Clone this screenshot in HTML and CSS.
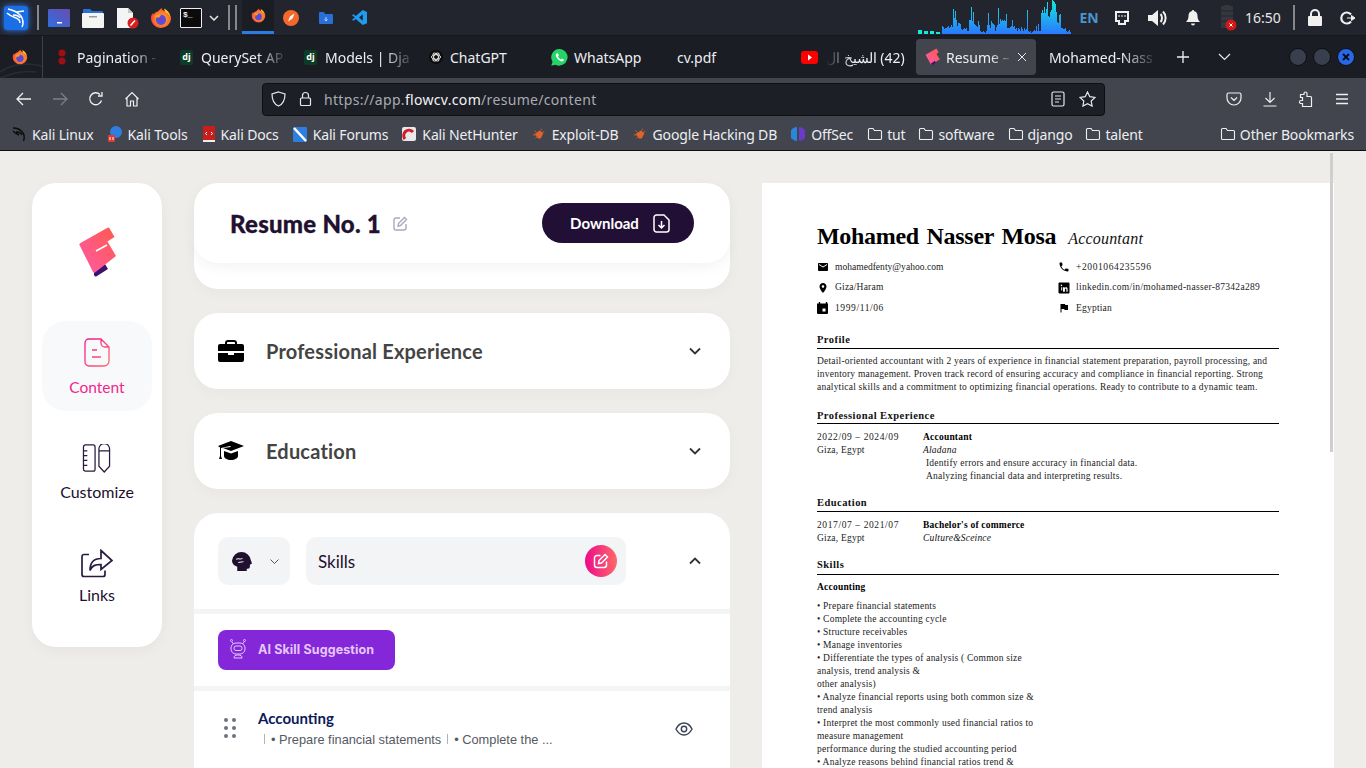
FILE: index.html
```html
<!DOCTYPE html>
<html lang="en">
<head>
    <meta charset="UTF-8">
    <meta name="viewport" content="width=device-width, initial-scale=1.0">
    <title>Resume - FlowCV</title>
    <link rel="stylesheet" href="styles.css">
</head>
<body>
    <!-- Shared gradients and symbols -->
    <svg class="svg-defs">
        <defs>
            <linearGradient id="grad-graph" gradientUnits="userSpaceOnUse" x1="0" y1="0" x2="0" y2="34">
                <stop offset="0" stop-color="#12e8dc"/>
                <stop offset="1" stop-color="#2a78ff"/>
            </linearGradient>
            <linearGradient id="grad-logo" x1="0" y1="1" x2="1" y2="0">
                <stop offset="0" stop-color="#ff5aa8"/>
                <stop offset="1" stop-color="#ff5a4c"/>
            </linearGradient>
            <linearGradient id="grad-content" x1="0" y1="0" x2="1" y2="1">
                <stop offset="0" stop-color="#f0168c"/>
                <stop offset="1" stop-color="#ff6a70"/>
            </linearGradient>
            <linearGradient id="grad-desktop" x1="0" y1="1" x2="1" y2="0">
                <stop offset="0" stop-color="#2f6fe0"/>
                <stop offset="1" stop-color="#6a4bb0"/>
            </linearGradient>
            <radialGradient id="grad-fox" cx="0.55" cy="0.55" r="0.6">
                <stop offset="0" stop-color="#ffb02e"/>
                <stop offset="0.7" stop-color="#ff6a2a"/>
                <stop offset="1" stop-color="#e8274e"/>
            </radialGradient>
            <symbol id="firefox" viewBox="0 0 24 24">
                <path d="M12 23A11 11 0 0 1 1.300 9.500C2 8 2.600 7 3.500 6.500L4 8.500C5 6.500 6.500 5.500 8.500 5 9.500 3.500 11 3 12.500 .8c.5 2.500 2 3.500 4.500 4.200 1.500.5 5 3.500 6 7.500A11 11 0 0 1 12 23z" fill="url(#grad-fox)"/>
                <path d="M15.500 1.500c4 2 7 6 7 10.500-1-3-3-5-5.500-6-1-1.500-1.500-3-1.500-4.500z" fill="#ffc22e"/>
                <circle cx="12" cy="14" r="5.500" fill="#4b55d8"/>
                <circle cx="12.500" cy="13.500" r="3" fill="#7a3bd0"/>
                <path d="M5 10c2-1.500 5-2 7-1l-2 2.500H7z" fill="#ff9a2e"/>
            </symbol>
            <symbol id="folder" viewBox="0 0 16 16">
                <path d="M1.500 3.500a1 1 0 0 1 1-1h3.500l1.500 2h6a1 1 0 0 1 1 1v7a1 1 0 0 1-1 1h-11a1 1 0 0 1-1-1z" fill="none" stroke="#eceef2" stroke-width="1.100"/>
            </symbol>
            <symbol id="fire-bug" viewBox="0 0 16 16">
                <path d="M3 8l6-4 4 3-3 6H7z" fill="#e2622a"/>
                <path d="M3 4l2 2M1 9h3M4 13l2-2M11 2l-1 2M14 5l-2 1" stroke="#e2622a" fill="none"/>
            </symbol>
        </defs>
    </svg>

    <!-- Desktop panel -->
    <header class="panel">
        <div class="launcher w34">
            <svg class="kali-logo" width="24" height="24" viewBox="0 0 24 24">
                <rect width="24" height="24" rx="3" fill="#1a6fe6"/>
                <path d="M4 3c5 1 9 3 12 6 2 2 3 5 3 8 0 1-.5 3-1 4M9 9c3 0 6 1 7 3M3 7c3 3 6 4 9 5 3 1 4 3 4 5M12 6l8-1" fill="none" stroke="#fff" stroke-width="1.500"/>
            </svg>
        </div>
        <span class="panel-sep"></span>
        <div class="launcher w34">
            <svg width="22" height="18" viewBox="0 0 22 18">
                <rect width="22" height="18" rx="1" fill="url(#grad-desktop)"/>
                <rect x="9" y="13" width="5" height="1.500" fill="#fff"/>
            </svg>
        </div>
        <div class="launcher w34">
            <svg width="22" height="20" viewBox="0 0 22 20">
                <path d="M1 2a1 1 0 0 1 1-1h6l2 2h10a1 1 0 0 1 1 1v2H1z" fill="#2a6fd8"/>
                <rect y="5" width="22" height="15" rx="1" fill="#f4f4f2"/>
                <rect x="7" y="8" width="8" height="1.500" fill="#9a9a9a"/>
            </svg>
        </div>
        <div class="launcher w36">
            <svg width="24" height="22" viewBox="0 0 24 22">
                <path d="M1 1h11l5 5v15H1z" fill="#f4f4f4"/>
                <path d="M12 1l5 5h-5z" fill="#c8c8c8"/>
                <circle cx="17" cy="16" r="5.500" fill="#d81e1e"/>
                <path d="M14.500 18.500l4.500-5" stroke="#fff" stroke-width="1.500"/>
            </svg>
        </div>
        <div class="launcher w30">
            <svg width="22" height="22"><use href="#firefox"/></svg>
        </div>
        <div class="launcher w30">
            <div class="term-icon">$_</div>
        </div>
        <div class="launcher w16">
            <svg width="10" height="6" viewBox="0 0 10 6"><path d="M1 1l4 4 4-4" fill="none" stroke="#e8e8e8" stroke-width="1.500"/></svg>
        </div>
        <span class="panel-sep sep-a"></span>
        <span class="panel-sep sep-b"></span>
        <div class="launcher w32 launcher-active">
            <svg width="15" height="15"><use href="#firefox"/></svg>
        </div>
        <div class="launcher w34">
            <svg width="16" height="16" viewBox="0 0 16 16">
                <circle cx="8" cy="8" r="8" fill="#f4682c"/>
                <path d="M5 11.500l2-5 4.500-3-2 5z" fill="#fff"/>
            </svg>
        </div>
        <div class="launcher w36">
            <svg width="14" height="12" viewBox="0 0 14 12">
                <path d="M0 1a1 1 0 0 1 1-1h4l1 2h7a1 1 0 0 1 1 1v8a1 1 0 0 1-1 1H1a1 1 0 0 1-1-1z" fill="#2a6fd8"/>
                <path d="M7 5v4M5.500 7.500L7 9l1.500-1.500" fill="none" stroke="#bcd6ff"/>
            </svg>
        </div>
        <div class="launcher w30">
            <svg width="15" height="15" viewBox="0 0 16 16">
                <path d="M11.500 0L16 2v12l-4.500 2L4 9.500 1.500 11.500 0 10.500 3 8 0 5.500 1.500 4.500 4 6.500zM11.500 4.500L7.500 8l4 3.500z" fill="#1f9cf0"/>
            </svg>
        </div>

        <div class="panel-spacer"></div>

        <div class="net-graph">
            <span class="net-block h4"></span>
            <span class="net-block h3"></span>
            <span class="net-block h3"></span>
            <span class="net-block h2"></span>
            <svg class="net-bars" width="129" height="34" viewBox="0 0 129 34">
                <path fill="url(#grad-graph)" d="M0 34V26h1V27h1V29h1V28h1V28h1V27h1V26h1V28h1V27h1V25h1V27h1V9h1V18h1V11h1V20h1V26h1V23h1V23h1V24h1V29h1V30h1V29h1V28h1V29h1V28h1V31h1V31h1V20h1V20h1V7h1V21h1V12h1V24h1V25h1V26h1V27h1V21h1V25h1V31h1V32h1V32h1V31h1V32h1V33h1V31h1V25h1V13h1V25h1V28h1V21h1V23h1V24h1V25h1V31h1V27h1V25h1V8h1V24h1V19h1V21h1V20h1V21h1V20h1V21h1V14h1V28h1V28h1V28h1V27h1V26h1V20h1V27h1V26h1V29h1V28h1V31h1V28h1V29h1V31h1V27h1V29h1V31h1V28h1V30h1V29h1V10h1V31h1V32h1V31h1V33h1V32h1V31h1V30h1V31h1V26h1V31h1V24h1V31h1V31h1V13h1V10h1V13h1V7h1V13h1V9h1V2h1V16h1V17h1V12h1V10h1V0h1V1h1V2h1V4h1V12h1V22h1V23h1V15h1V14h1V28h1V28h1V29h1V29h1V28h1V31h1V32h1V31h1V30h1V32h1V34z"/>
            </svg>
        </div>
        <div class="tray w34 tray-lang">EN</div>
        <div class="tray w32">
            <svg width="16" height="16" viewBox="0 0 16 16">
                <path d="M2 2h12v9h-3v3H5v-3H2z" fill="none" stroke="#f0f0f0" stroke-width="2"/>
                <path d="M5 5v2M8 5v2M11 5v2" stroke="#f0f0f0"/>
            </svg>
        </div>
        <div class="tray w40">
            <svg width="20" height="18" viewBox="0 0 20 18">
                <path d="M0 6h4l6-5v16l-6-5H0z" fill="#f0f0f0"/>
                <path d="M12.500 5c2 2 2 6 0 8M15 2.500c3.500 3.500 3.500 9.500 0 13" fill="none" stroke="#f0f0f0" stroke-width="2"/>
            </svg>
        </div>
        <div class="tray w30">
            <svg width="14" height="16" viewBox="0 0 14 16">
                <path d="M7 0c.7 0 1 .5 1 1 2.500.5 3.500 2.500 3.500 5 0 3 1 4.500 2.500 6H0c1.500-1.500 2.500-3 2.500-6 0-2.500 1-4.500 3.500-5 0-.5.3-1 1-1zM5 13.500h4a2 2 0 0 1-4 0z" fill="#f0f0f0"/>
            </svg>
        </div>
        <div class="tray w34 tray-battery">
            <svg width="18" height="26" viewBox="0 0 18 26">
                <rect x="2" y="1" width="12" height="22" rx="1" fill="#34373e"/>
                <rect x="5" y="0" width="6" height="2" fill="#34373e"/>
                <path d="M2 6h12M2 11h12M2 16h12" stroke="#23262e"/>
                <circle cx="12" cy="20" r="5.500" fill="#d01818"/>
                <path d="M10.500 18.500l3 3M13.500 18.500l-3 3" stroke="#fff"/>
            </svg>
        </div>
        <div class="clock">16:50</div>
        <span class="panel-sep sep-clock"></span>
        <div class="tray w30 tray-lock">
            <svg width="14" height="17" viewBox="0 0 14 17">
                <path d="M3 7V5a4 4 0 0 1 8 0v2" fill="none" stroke="#f0f0f0" stroke-width="2"/>
                <rect y="7" width="14" height="10" rx="1" fill="#f0f0f0"/>
            </svg>
        </div>
        <div class="tray w36">
            <svg width="16" height="14" viewBox="0 0 16 14">
                <path d="M11 3.500a5.500 5.500 0 1 0 0 7" fill="none" stroke="#f0f0f0" stroke-width="2.200"/>
                <path d="M7 7h6M11.500 4.500L15 7l-3.500 2.500z" fill="#f0f0f0" stroke="#f0f0f0"/>
            </svg>
        </div>
    </header>

    <!-- Firefox tab strip -->
    <div class="tabbar">
        <div class="fx-btn">
            <svg class="fx-curves" width="42" height="42" viewBox="0 0 42 42">
                <path d="M0 36c12-8 26-10 42-6M0 42c10-4 22-8 36-6" fill="none" stroke="#2a2c33" stroke-width="1.500"/>
            </svg>
            <svg class="fx-logo" width="16" height="16"><use href="#firefox"/></svg>
        </div>
        <div class="tabs">
            <div class="tab tab-pagination">
                <svg class="tab-icon" width="8" height="16" viewBox="0 0 8 16"><circle cx="4" cy="4" r="3.500" fill="#9c0f14"/><circle cx="4" cy="12" r="3.500" fill="#9c0f14"/></svg>
                <span class="tab-title tab-fade">Pagination -</span>
            </div>
            <div class="tab">
                <span class="dj-icon">dj</span>
                <span class="tab-title tab-fade">QuerySet AP</span>
            </div>
            <div class="tab">
                <span class="dj-icon">dj</span>
                <span class="tab-title tab-fade">Models | Dja</span>
            </div>
            <div class="tab tab-gpt">
                <svg class="tab-icon" width="14" height="14" viewBox="0 0 14 14">
                    <circle cx="7" cy="7" r="7" fill="#0d0d0d"/>
                    <g fill="none" stroke="#f0f0f0" stroke-width=".9">
                        <ellipse cx="7" cy="7" rx="4.500" ry="2.300"/>
                        <ellipse cx="7" cy="7" rx="4.500" ry="2.300" transform="rotate(60 7 7)"/>
                        <ellipse cx="7" cy="7" rx="4.500" ry="2.300" transform="rotate(120 7 7)"/>
                    </g>
                </svg>
                <span class="tab-title">ChatGPT</span>
            </div>
            <div class="tab tab-wa">
                <svg class="tab-icon" width="17" height="17" viewBox="0 0 17 17">
                    <path d="M8.500 0a8.300 8.300 0 0 0-7 12.700L.3 16.800l4.200-1.100A8.300 8.300 0 1 0 8.500 0z" fill="#25d366"/>
                    <path d="M5.500 4.500c-1 1-1 2.500.5 4.500s3.500 3.500 5 3.500c1 0 2-1 2-1.700l-2-1.300-1 1c-1.500-.5-2.500-1.700-3-3l.8-1-1-2.300z" fill="#fff"/>
                </svg>
                <span class="tab-title">WhatsApp</span>
            </div>
            <div class="tab">
                <span class="tab-title">cv.pdf</span>
            </div>
            <div class="tab">
                <svg class="tab-icon" width="17" height="13" viewBox="0 0 17 13">
                    <rect width="17" height="13" rx="3" fill="#f00"/>
                    <path d="M7 3.500l4 3-4 3z" fill="#fff"/>
                </svg>
                <span class="tab-title tab-rtl" dir="rtl">(42) الشيخ ال</span>
            </div>
            <div class="tab tab-active">
                <svg class="tab-icon" width="15" height="18" viewBox="0 0 39 48">
                    <path d="M1 18L30 1l6 10-6 5 9 14-23 15z" fill="url(#grad-logo)"/>
                    <path d="M15 42l11-8 2 5-10 7z" fill="#3c1170"/>
                </svg>
                <span class="tab-title tab-fade">Resume –</span>
                <svg class="tab-close" width="10" height="10" viewBox="0 0 10 10"><path d="M1 1l8 8M9 1l-8 8" stroke="#e8e8ea" stroke-width="1"/></svg>
            </div>
            <div class="tab">
                <span class="tab-title tab-fade">Mohamed-Nass</span>
            </div>
        </div>
        <div class="tabbar-btn first">
            <svg width="14" height="14" viewBox="0 0 14 14"><path d="M7 1v12M1 7h12" stroke="#f0f0f0" stroke-width="1.300"/></svg>
        </div>
        <div class="tabbar-btn">
            <svg width="13" height="8" viewBox="0 0 13 8"><path d="M1 1l5.500 5.500L12 1" fill="none" stroke="#e8e8ea" stroke-width="1.200"/></svg>
        </div>
        <div class="win-btns">
            <span class="win-btn"></span>
            <span class="win-btn"></span>
            <span class="win-btn win-close">
                <svg width="8" height="8" viewBox="0 0 8 8"><path d="M1 1l6 6M7 1L1 7" stroke="#0a0a14" stroke-width="1.800"/></svg>
            </span>
        </div>
    </div>

    <!-- Firefox toolbar -->
    <div class="toolbar">
        <div class="tool-btn">
            <svg width="16" height="14" viewBox="0 0 16 14"><path d="M15 7H1.500M7 1L1 7l6 6" fill="none" stroke="#f0f0f2" stroke-width="1.300"/></svg>
        </div>
        <div class="tool-btn">
            <svg width="16" height="14" viewBox="0 0 16 14"><path d="M1 7h13.500M9 1l6 6-6 6" fill="none" stroke="#7d7f86" stroke-width="1.300"/></svg>
        </div>
        <div class="tool-btn">
            <svg width="16" height="16" viewBox="0 0 16 16"><path d="M13.500 9.500A6 6 0 1 1 12 3.500M14 1v4h-4" fill="none" stroke="#f0f0f2" stroke-width="1.300"/></svg>
        </div>
        <div class="tool-btn">
            <svg width="16" height="16" viewBox="0 0 16 16"><path d="M1.500 8L8 1.500 14.500 8M3 7v8h3.500v-5h3v5H13V7" fill="none" stroke="#f0f0f2" stroke-width="1.200"/></svg>
        </div>
        <div class="urlbar">
            <svg class="url-shield" width="15" height="16" viewBox="0 0 15 16"><path d="M7.500 1L14 3c0 6-1.500 10-6.500 12C2.500 13 1 9 1 3z" fill="none" stroke="#e8e8ea" stroke-width="1.200"/></svg>
            <svg class="url-lock" width="13" height="16" viewBox="0 0 13 16"><path d="M3.500 7V4.500a3 3 0 0 1 6 0V7" fill="none" stroke="#e8e8ea" stroke-width="1.200"/><rect x="1.500" y="7" width="10" height="7.500" rx="1" fill="none" stroke="#e8e8ea" stroke-width="1.200"/></svg>
            <span class="url-text">https://app.<b>flowcv.com</b>/resume/content</span>
            <svg class="url-reader" width="14" height="16" viewBox="0 0 14 16"><rect x="1" y="1" width="12" height="14" rx="1.500" fill="none" stroke="#e8e8ea" stroke-width="1.200"/><path d="M4 5h6M4 8h6M4 11h4" stroke="#e8e8ea"/></svg>
            <svg class="url-star" width="17" height="16" viewBox="0 0 17 16"><path d="M8.500 1l2.300 4.700 5.200.7-3.800 3.600.9 5.100-4.600-2.400-4.600 2.400.9-5.100L1 6.400l5.200-.7z" fill="none" stroke="#e8e8ea" stroke-width="1.200"/></svg>
        </div>
        <div class="tool-btn">
            <svg width="16" height="16" viewBox="0 0 16 16"><path d="M2.500 2h11A1.500 1.500 0 0 1 15 3.500V7A7 7 0 0 1 1 7V3.500A1.500 1.500 0 0 1 2.500 2zM5 6.500l3 3 3-3" fill="none" stroke="#f0f0f2" stroke-width="1.200"/></svg>
        </div>
        <div class="tool-btn">
            <svg width="16" height="16" viewBox="0 0 16 16"><path d="M8 1v10M3.500 7L8 11.500 12.500 7M1.500 15h13" fill="none" stroke="#f0f0f2" stroke-width="1.200"/></svg>
        </div>
        <div class="tool-btn">
            <svg width="16" height="17" viewBox="0 0 16 17"><path d="M6 3.500V2.500a1.500 1.500 0 0 1 3 0v3h3.500a1 1 0 0 1 1 1v9h-9v-3H3a1.500 1.500 0 0 1 0-3h1.500v-3H2.500v-3z" fill="none" stroke="#f0f0f2" stroke-width="1.200"/></svg>
        </div>
        <div class="tool-btn">
            <svg width="14" height="12" viewBox="0 0 14 12"><path d="M1 1.500h12M1 6h12M1 10.500h12" stroke="#f0f0f2" stroke-width="1.300"/></svg>
        </div>
    </div>

    <!-- Bookmarks -->
    <div class="bookmarks">
        <div class="bm">
            <svg class="bm-icon" width="14" height="15" viewBox="0 0 14 15"><path d="M1 1c4 0 8 2 10 5 1.500 2 1.500 5 .5 8M4 5c3 0 5 1 6 3M1 4c2 2 4 3 6 4" fill="none" stroke="#0c0c0c" stroke-width="1.400"/></svg>
            <span>Kali Linux</span>
        </div>
        <div class="bm">
            <svg class="bm-icon" width="14" height="16" viewBox="0 0 14 16"><circle cx="8" cy="6" r="6" fill="#2f7de1"/><rect x="0" y="9" width="7" height="7" rx="1" fill="#e03a2e"/><path d="M2 11v3M5 11v3" stroke="#fff"/></svg>
            <span>Kali Tools</span>
        </div>
        <div class="bm">
            <svg class="bm-icon" width="13" height="16" viewBox="0 0 13 16"><rect x="1" width="12" height="14" fill="#c81e1e"/><rect x="1" y="14" width="12" height="2" fill="#eee"/><path d="M5 6L3.500 7.500 5 9M9 6l1.500 1.500L9 9" fill="none" stroke="#fff"/></svg>
            <span>Kali Docs</span>
        </div>
        <div class="bm">
            <svg class="bm-icon" width="14" height="15" viewBox="0 0 14 15"><rect width="14" height="15" rx="1" fill="#2e7ee0"/><path d="M1 1l12 13" stroke="#fff" stroke-width="2.500"/></svg>
            <span>Kali Forums</span>
        </div>
        <div class="bm">
            <svg class="bm-icon" width="14" height="14" viewBox="0 0 14 14"><rect width="14" height="14" rx="2" fill="#e8e8ea"/><path d="M3 12A5 5 0 0 1 11 5" fill="none" stroke="#d01c2c" stroke-width="3"/></svg>
            <span>Kali NetHunter</span>
        </div>
        <div class="bm">
            <svg class="bm-icon" width="14" height="14"><use href="#fire-bug"/></svg>
            <span>Exploit-DB</span>
        </div>
        <div class="bm">
            <svg class="bm-icon" width="14" height="14"><use href="#fire-bug"/></svg>
            <span>Google Hacking DB</span>
        </div>
        <div class="bm">
            <svg class="bm-icon" width="14" height="16" viewBox="0 0 14 16"><path d="M6 1A7 7 0 0 0 6 15z" fill="#2a86d8"/><path d="M8 1a7 7 0 0 1 0 14z" fill="#6a3bc8"/></svg>
            <span>OffSec</span>
        </div>
        <div class="bm bm-folder"><svg width="16" height="16"><use href="#folder"/></svg><span>tut</span></div>
        <div class="bm bm-folder"><svg width="16" height="16"><use href="#folder"/></svg><span>software</span></div>
        <div class="bm bm-folder"><svg width="16" height="16"><use href="#folder"/></svg><span>django</span></div>
        <div class="bm bm-folder"><svg width="16" height="16"><use href="#folder"/></svg><span>talent</span></div>
        <div class="bm bm-folder bm-other"><svg width="16" height="16"><use href="#folder"/></svg><span>Other Bookmarks</span></div>
    </div>

    <!-- Page content -->
    <main class="page">
        <nav class="side">
            <svg class="side-logo" width="40" height="50" viewBox="0 0 40 50">
                <path d="M15 45l11-8 3 5-11 7a2 2 0 0 1-3-1z" fill="#3c1170"/>
                <path d="M1.500 16L28.500 .8a1.500 1.500 0 0 1 2 .5l5 8.700-7 4.500L37 29 16 45.500a1.500 1.500 0 0 1-2-.5L1 19a2 2 0 0 1 .5-3z" fill="url(#grad-logo)"/>
                <path d="M17 24l11-6" stroke="#fff" stroke-width="1.500"/>
            </svg>
            <a class="side-item side-item-active">
                <svg width="26" height="29" viewBox="0 0 26 29">
                    <path d="M5 1h12l8 8v14a5 5 0 0 1-5 5H5a4 4 0 0 1-4-4V5a4 4 0 0 1 4-4zM17 1v4a4 4 0 0 0 4 4h4M8 12h5M8 19h9" fill="none" stroke="url(#grad-content)" stroke-width="1.300"/>
                </svg>
                <span>Content</span>
            </a>
            <a class="side-item">
                <svg width="30" height="30" viewBox="0 0 30 30">
                    <g fill="none" stroke="#2b1a40" stroke-width="1.300">
                        <rect x="1" y="1" width="12" height="27" rx="2"/>
                        <path d="M1 7h4M1 12h4M1 17h4M1 22h4"/>
                        <path d="M17 5a5.500 5.500 0 0 1 11 0v18l-5.500 6-5.500-6zM17 7h11"/>
                    </g>
                </svg>
                <span>Customize</span>
            </a>
            <a class="side-item side-item-links">
                <svg width="32" height="28" viewBox="0 0 32 28">
                    <path d="M8 5H3a2 2 0 0 0-2 2v18a2 2 0 0 0 2 2h19a2 2 0 0 0 2-2v-4M20 1l11 10-11 9v-5c-6 0-9 1-11 6 0-8 4-12 11-12z" fill="none" stroke="#2b1a40" stroke-width="1.700"/>
                </svg>
                <span>Links</span>
            </a>
        </nav>

        <section class="editor">
            <div class="title-card">
                <div class="title-left">
                    <h1>Resume No. 1</h1>
                    <svg width="15" height="15" viewBox="0 0 15 15"><path d="M7 2H3a2 2 0 0 0-2 2v8a2 2 0 0 0 2 2h8a2 2 0 0 0 2-2V8M5.500 7.500L11.500 1.500l2 2-6 6-2.500.5z" fill="none" stroke="#a8abb8" stroke-width="1.400"/></svg>
                </div>
                <button class="download-btn">
                    <span>Download</span>
                    <svg width="17" height="19" viewBox="0 0 17 19"><path d="M3.500 1H11l5 5v9.500A2.500 2.500 0 0 1 13.500 18h-10A2.500 2.500 0 0 1 1 15.500v-12A2.500 2.500 0 0 1 3.500 1zM8.500 7v7M5.500 11l3 3 3-3" fill="none" stroke="#fff" stroke-width="1.500"/></svg>
                </button>
            </div>
            <div class="card-stub"></div>

            <div class="acc-card">
                <svg class="acc-icon" width="26" height="22" viewBox="0 0 26 22">
                    <path d="M8 5V3a2 2 0 0 1 2-2h6a2 2 0 0 1 2 2v2" fill="none" stroke="#000" stroke-width="2"/>
                    <path d="M2 4h22a2 2 0 0 1 2 2v5H0V6a2 2 0 0 1 2-2zM0 13h10v2h6v-2h10v7a2 2 0 0 1-2 2H2a2 2 0 0 1-2-2z" fill="#000"/>
                </svg>
                <h2>Professional Experience</h2>
                <svg class="acc-chev" width="12" height="8" viewBox="0 0 12 8"><path d="M1 1.500l5 5 5-5" fill="none" stroke="#333" stroke-width="1.800"/></svg>
            </div>

            <div class="acc-card">
                <svg class="acc-icon" width="26" height="20" viewBox="0 0 26 20">
                    <path d="M13 0l13 5-13 5L5 7l8-1-1-1-9 2v8l1 3H1l1-3V6.500L0 5z" fill="#000"/>
                    <path d="M6 10l7 2.500 7-2.500v5c0 2-3 4-7 4s-7-2-7-4z" fill="#000"/>
                </svg>
                <h2>Education</h2>
                <svg class="acc-chev" width="12" height="8" viewBox="0 0 12 8"><path d="M1 1.500l5 5 5-5" fill="none" stroke="#333" stroke-width="1.800"/></svg>
            </div>

            <div class="skills-card">
                <div class="skills-head">
                    <div class="icon-select">
                        <svg width="20" height="19" viewBox="0 0 19 18">
                            <path d="M9 0a9 9 0 0 1 9 8l1 3-2 1v2a2 2 0 0 1-2 2h-1v2H5v-4C2 13 0 11 0 8a9 9 0 0 1 9-8z" fill="#1f1030"/>
                            <path d="M4 7c2-2 3 1 6-1M6 10c2-1 4 0 5-1" fill="none" stroke="#f3f4f6" stroke-width="1"/>
                        </svg>
                        <svg width="9" height="5" viewBox="0 0 9 5"><path d="M.5.500l4 4 4-4" fill="none" stroke="#555"/></svg>
                    </div>
                    <div class="skill-input">
                        <span>Skills</span>
                        <span class="edit-circle">
                            <svg width="16" height="16" viewBox="0 0 16 16"><path d="M7.500 2.500H4a2.500 2.500 0 0 0-2.500 2.500v7A2.500 2.500 0 0 0 4 14.500h7a2.500 2.500 0 0 0 2.500-2.500V8.500M6 7.500l6-6 2.500 2.500-6 6-3 .5z" fill="none" stroke="#fff" stroke-width="1.500"/></svg>
                        </span>
                    </div>
                    <svg class="acc-chev" width="12" height="8" viewBox="0 0 12 8"><path d="M1 6.500l5-5 5 5" fill="none" stroke="#333" stroke-width="1.800"/></svg>
                </div>
                <div class="skills-ai">
                    <button class="ai-btn">
                        <svg width="16" height="20" viewBox="0 0 16 20">
                            <g fill="none" stroke="#e6c8f8" stroke-width="1">
                                <circle cx="1.500" cy="1.500" r="1"/>
                                <circle cx="14.500" cy="1.500" r="1"/>
                                <path d="M2 3l1.500 2M14 3l-1.500 2"/>
                                <rect x="1" y="4" width="14" height="11" rx="5"/>
                                <rect x="4" y="7" width="8" height="4.500" rx="2"/>
                                <path d="M4 19c0-2 1-3 4-3s4 1 4 3z"/>
                            </g>
                        </svg>
                        <span>AI Skill Suggestion</span>
                    </button>
                </div>
                <div class="skill-row">
                    <div class="drag-dots">
                        <span></span><span></span><span></span><span></span><span></span><span></span>
                    </div>
                    <div class="skill-text">
                        <div class="skill-name">Accounting</div>
                        <div class="skill-sub">
                            <span class="skill-bar"></span><span>• Prepare financial statements</span><span class="skill-bar"></span><span>• Complete the ...</span>
                        </div>
                    </div>
                    <svg class="skill-eye" width="18" height="14" viewBox="0 0 18 14">
                        <path d="M1 7c2-4 5-6 8-6s6 2 8 6c-2 4-5 6-8 6S3 11 1 7z" fill="none" stroke="#3a4256" stroke-width="1.400"/>
                        <circle cx="9" cy="7" r="2.700" fill="none" stroke="#3a4256" stroke-width="1.400"/>
                    </svg>
                </div>
            </div>
        </section>

        <article class="paper">
            <div class="cv-head">
                <span class="cv-name">Mohamed Nasser Mosa</span>
                <span class="cv-role">Accountant</span>
            </div>
            <div class="cv-contacts">
                <div class="cv-contact">
                    <svg width="12" height="12" viewBox="0 0 24 24"><path d="M20 4H4c-1.100 0-2 .9-2 2v12c0 1.100.9 2 2 2h16c1.100 0 2-.9 2-2V6c0-1.100-.9-2-2-2zm0 4l-8 5-8-5V6l8 5 8-5v2z"/></svg>
                    <span class="cv-tight">mohamedfenty@yahoo.com</span>
                </div>
                <div class="cv-contact">
                    <svg width="12" height="12" viewBox="0 0 24 24"><path d="M6.620 10.790c1.440 2.830 3.760 5.140 6.590 6.590l2.200-2.200c.27-.27.67-.36 1.020-.24 1.120.37 2.330.57 3.570.57.55 0 1 .45 1 1V20c0 .55-.45 1-1 1-9.390 0-17-7.610-17-17 0-.55.45-1 1-1h3.500c.55 0 1 .45 1 1 0 1.250.2 2.450.57 3.570.11.350.03.740-.25 1.020l-2.200 2.200z"/></svg>
                    <span class="cv-num">+2001064235596</span>
                </div>
                <div class="cv-contact">
                    <svg width="12" height="12" viewBox="0 0 24 24"><path d="M12 2C8.130 2 5 5.130 5 9c0 5.250 7 13 7 13s7-7.750 7-13c0-3.870-3.130-7-7-7zm0 9.500c-1.380 0-2.500-1.120-2.500-2.500s1.120-2.500 2.500-2.500 2.500 1.120 2.500 2.500-1.120 2.500-2.500 2.500z"/></svg>
                    <span>Giza/Haram</span>
                </div>
                <div class="cv-contact">
                    <svg width="12" height="12" viewBox="0 0 12 12"><rect x=".5" y=".5" width="11" height="11" rx="1"/><path d="M2.200 4.300h2v3.200h-1v-3.200zM2.700 2.400a.7.7 0 1 1 0 .01z" fill="#fff" transform="translate(0 1)"/><path d="M5 5.300h1.600v.6c.3-.4.800-.7 1.400-.7 1 0 1.600.6 1.600 1.900v2.600H8.400V7.400c0-.6-.2-1-.7-1s-.8.4-.8 1v2.300H5z" fill="#fff"/></svg>
                    <span class="cv-link">linkedin.com/in/mohamed-nasser-87342a289</span>
                </div>
                <div class="cv-contact">
                    <svg width="12" height="12" viewBox="0 0 12 12"><path d="M3.200 0v1.500h5.600V0h1.400v1.500h.8v9.500a1 1 0 0 1-1 1H1a1 1 0 0 1-1-1V1.500h1.800V0z"/><rect x="5.500" y="6.500" width="3" height="3" fill="#fff"/></svg>
                    <span class="cv-num">1999/11/06</span>
                </div>
                <div class="cv-contact">
                    <svg width="12" height="12" viewBox="0 0 24 24"><path d="M14.400 6L14 4H5v17h2v-7h5.600l.4 2h7V6z"/></svg>
                    <span>Egyptian</span>
                </div>
            </div>

            <h3 class="cv-title cv-title-first">Profile</h3>
            <p class="cv-text">Detail-oriented accountant with 2 years of experience in financial statement preparation, payroll processing, and<br>inventory management. Proven track record of ensuring accuracy and compliance in financial reporting. Strong<br>analytical skills and a commitment to optimizing financial operations. Ready to contribute to a dynamic team.</p>

            <h3 class="cv-title cv-title-exp">Professional Experience</h3>
            <div class="cv-entry">
                <div class="cv-when"><span class="cv-num">2022/09 – 2024/09</span><br>Giza, Egypt</div>
                <div class="cv-what">
                    <strong>Accountant</strong><br>
                    <em>Aladana</em>
                    <div class="cv-indent">Identify errors and ensure accuracy in financial data.<br>Analyzing financial data and interpreting results.</div>
                </div>
            </div>

            <h3 class="cv-title">Education</h3>
            <div class="cv-entry">
                <div class="cv-when"><span class="cv-num">2017/07 – 2021/07</span><br>Giza, Egypt</div>
                <div class="cv-what">
                    <strong>Bachelor's of commerce</strong><br>
                    <em>Culture&amp;Sceince</em>
                </div>
            </div>

            <h3 class="cv-title cv-title-skills">Skills</h3>
            <div class="cv-skill-name">Accounting</div>
            <p class="cv-text cv-list">• Prepare financial statements<br>• Complete the accounting cycle<br>• Structure receivables<br>• Manage inventories<br>• Differentiate the types of analysis ( Common size<br>analysis, trend analysis &amp;<br>other analysis)<br>• Analyze financial reports using both common size &amp;<br>trend analysis<br>• Interpret the most commonly used financial ratios to<br>measure management<br>performance during the studied accounting period<br>• Analyze reasons behind financial ratios trend &amp;</p>
        </article>
        <div class="page-scroll"></div>
    </main>
</body>
</html>
```

FILE: styles.css
```css
* {
    box-sizing: border-box;
}

html, body {
    margin: 0;
    padding: 0;
    height: 768px;
    overflow: hidden;
}

body {
    font-family: "Noto Sans", sans-serif;
    background-color: #eeedea;
    display: flex;
    flex-direction: column;
}

.svg-defs {
    display: block;
    width: 0;
    height: 0;
    flex: none;
}

svg {
    flex: none;
}

/* Desktop panel */
.panel {
    height: 36px;
    flex: none;
    display: flex;
    align-items: center;
    background-color: #22252d;
    border-bottom: 1px solid #17181d;
    color: #f0f0f0;
}

.launcher, .tray {
    height: 35px;
    display: flex;
    align-items: center;
    justify-content: center;
    flex: none;
}

.w16 { width: 16px; }
.w30 { width: 30px; }
.w32 { width: 32px; }
.w34 { width: 34px; }
.w36 { width: 36px; }
.w40 { width: 40px; }

.kali-logo {
    margin-right: 3px;
    filter: drop-shadow(0 0 3px #2a7fff);
}

.panel-sep {
    width: 2px;
    height: 25px;
    margin: 0 3px;
    background-color: #85878c;
    flex: none;
}

.sep-a { margin: 0 2px 0 6px; }
.sep-b { margin: 0 5px 0 3px; }
.sep-clock { margin: 0 0 0 12px; }

.term-icon {
    width: 22px;
    height: 20px;
    border: 1px solid #eee;
    background-color: #0b0b0d;
    color: #eee;
    font-family: "Liberation Mono", monospace;
    font-size: 8px;
    font-weight: bold;
    line-height: 12px;
    padding-left: 2px;
    border-radius: 1px;
}

.launcher-active {
    background-color: #1b1d24;
    border-bottom: 3px solid #2a7be4;
    height: 34px;
    margin-bottom: 1px;
}

.panel-spacer {
    flex: 1;
}

.net-graph {
    display: flex;
    align-items: flex-end;
    height: 35px;
    width: 153px;
    gap: 2px;
    padding-bottom: 1px;
}

.net-block {
    width: 4px;
    background-color: #12ecd6;
}

.h4 { height: 4px; }
.h3 { height: 3px; }
.h2 { height: 2px; }

.net-bars {
    display: block;
}

.tray-lang {
    color: #4b95cf;
    font-weight: 700;
    font-size: 14px;
    margin-left: 1px;
}

.tray-battery {
    margin-left: 3px;
}

.clock {
    width: 36px;
    font-size: 14px;
    color: #e8e8e8;
}

.tray-lock {
    margin-left: 5px;
}

/* Tab strip */
.tabbar {
    height: 42px;
    flex: none;
    display: flex;
    align-items: center;
    background-color: #1b1d25;
    color: #eceef2;
    font-size: 14px;
}

.fx-btn {
    width: 43px;
    height: 42px;
    flex: none;
    position: relative;
    border-right: 1px solid #3e4047;
    overflow: hidden;
}

.fx-curves {
    position: absolute;
    left: 0;
    top: 0;
}

.fx-logo {
    position: absolute;
    left: 12px;
    top: 13px;
}

.tabs {
    display: flex;
    gap: 4px;
    margin-left: 5px;
    flex: none;
}

.tab {
    width: 120px;
    height: 36px;
    display: flex;
    align-items: center;
    gap: 8px;
    padding: 0 9px;
    border-radius: 4px;
    white-space: nowrap;
}

.tab-pagination {
    padding-left: 10px;
    gap: 11px;
}

.tab-gpt {
    gap: 7px;
}

.tab-wa {
    padding-left: 7px;
    gap: 6px;
}

.tab-active {
    background-color: #42454e;
    gap: 6px;
}

.tab-fade {
    mask-image: linear-gradient(to right, #000 70%, rgba(0, 0, 0, 0.15) 100%);
}

.tab-rtl {
    flex: 1;
    mask-image: linear-gradient(to left, #000 65%, transparent 100%);
}

.tab-close {
    margin-left: auto;
}

.dj-icon {
    width: 13px;
    height: 15px;
    flex: none;
    margin-left: -1px;
    background-color: #0c3c26;
    border-radius: 2px;
    color: #fff;
    font-size: 9px;
    font-weight: 700;
    line-height: 14px;
    text-align: center;
}

.tabbar-btn {
    width: 34px;
    height: 36px;
    flex: none;
    display: flex;
    align-items: center;
    justify-content: center;
}

.tabbar-btn.first {
    margin: 0 7px 0 6px;
}

.win-btns {
    display: flex;
    gap: 6px;
    margin-left: 48px;
}

.win-btn {
    width: 18px;
    height: 18px;
    border-radius: 50%;
    background-color: #3a3f4d;
    border: 1px solid #0d0e12;
    display: flex;
    align-items: center;
    justify-content: center;
}

.win-close {
    background-color: #2868e8;
}

/* Toolbar */
.toolbar {
    height: 42px;
    flex: none;
    display: flex;
    align-items: center;
    padding-left: 6px;
    background-color: #42454e;
}

.tool-btn {
    width: 36px;
    height: 32px;
    flex: none;
    display: flex;
    align-items: center;
    justify-content: center;
}

.urlbar {
    width: 843px;
    height: 33px;
    flex: none;
    display: flex;
    align-items: center;
    margin: 0 111px 0 112px;
    background-color: #1d1f27;
    border: 1px solid #0e0f13;
    border-radius: 4px;
    padding: 0 8px;
    color: #a9abb0;
    font-size: 14px;
}

.url-lock {
    margin-left: 13px;
}

.url-text {
    margin-left: 12px;
    flex: 1;
    white-space: nowrap;
    letter-spacing: 0.32px;
}

.url-text b {
    font-weight: 400;
    color: #f2f2f4;
}

.url-star {
    margin-left: 14px;
}

/* Bookmarks */
.bookmarks {
    height: 31px;
    flex: none;
    display: flex;
    align-items: flex-start;
    padding: 3px 12px 0;
    gap: 14px;
    background-color: #42454e;
    border-bottom: 1px solid #0e0f13;
    color: #eceef2;
    font-size: 14px;
    letter-spacing: -0.15px;
}

.bm {
    display: flex;
    align-items: center;
    gap: 6px;
    height: 22px;
    white-space: nowrap;
}

.bm-folder {
    gap: 4px;
}

.bm-folder + .bm-folder {
    margin-left: -1px;
}

.bookmarks .bm-other {
    margin-left: auto;
}

/* Page layout */
.page {
    flex: 1;
    min-height: 0;
    display: flex;
    align-items: flex-start;
    gap: 32px;
    padding: 32px 32px 0;
    position: relative;
    overflow: hidden;
    font-family: Lato, sans-serif;
    color: #21102f;
}

.page-scroll {
    position: absolute;
    left: 1330px;
    top: 2px;
    width: 3px;
    height: 299px;
    background-color: #cfcfcf;
}

/* Sidebar */
.side {
    width: 130px;
    height: 464px;
    flex: none;
    display: flex;
    flex-direction: column;
    align-items: center;
    padding: 44px 10px 0;
    gap: 15.500px;
    background-color: #fff;
    border-radius: 24px;
    box-shadow: 0 4px 14px rgba(0, 0, 0, 0.04);
}

.side-logo {
    margin: 0 0 28.500px 3px;
}

.side-item {
    width: 110px;
    height: 90px;
    display: flex;
    flex-direction: column;
    align-items: center;
    padding-top: 17px;
    gap: 9px;
    border-radius: 24px;
    font-size: 16px;
}

.side-item svg {
    height: 29px;
}

.side-item-active {
    background-color: #f8f9fb;
    color: #f0288c;
    font-size: 15.500px;
    gap: 11px;
}

.side-item-links {
    gap: 7px;
}

/* Editor column */
.editor {
    width: 536px;
    flex: none;
}

.title-card {
    height: 80px;
    display: flex;
    align-items: center;
    justify-content: space-between;
    padding: 0 36px;
    background-color: #fff;
    border-radius: 24px;
    box-shadow: 0 4px 14px rgba(0, 0, 0, 0.05);
    position: relative;
    z-index: 1;
}

.title-left {
    display: flex;
    align-items: center;
    gap: 12px;
}

.title-left h1 {
    margin: 0;
    font-size: 24px;
    font-weight: 900;
    letter-spacing: 0.25px;
    -webkit-text-stroke: 0.3px #21102f;
    color: #21102f;
}

.download-btn {
    width: 152px;
    height: 40px;
    display: flex;
    align-items: center;
    justify-content: center;
    gap: 14px;
    padding: 0 0 0 4px;
    border: none;
    border-radius: 20px;
    background-color: #220f36;
    color: #fff;
    font-family: inherit;
    font-size: 15px;
    font-weight: 700;
}

.card-stub {
    height: 50px;
    margin-top: -24px;
    margin-bottom: 24px;
    background-color: #fff;
    border-radius: 0 0 24px 24px;
    box-shadow: 0 4px 14px rgba(0, 0, 0, 0.03);
}

.acc-card {
    height: 76px;
    display: flex;
    align-items: center;
    padding: 0 29px 0 24px;
    margin-bottom: 24px;
    background-color: #fff;
    border-radius: 24px;
    box-shadow: 0 4px 14px rgba(0, 0, 0, 0.03);
}

.acc-icon {
    margin-right: 22px;
}

.acc-card h2 {
    margin: 0;
    flex: 1;
    font-size: 20px;
    font-weight: 700;
    letter-spacing: 0.2px;
    color: #444;
}

/* Skills card */
.skills-card {
    background-color: #fff;
    border-radius: 24px 24px 0 0;
    height: 300px;
}

.skills-head {
    height: 96px;
    display: flex;
    align-items: center;
    padding: 0 29px 0 24px;
}

.skills-head .acc-chev {
    margin-left: auto;
}

.icon-select {
    width: 72px;
    height: 48px;
    display: flex;
    align-items: center;
    justify-content: space-between;
    padding: 0 11px 0 14px;
    background-color: #f3f4f6;
    border-radius: 10px;
}

.skill-input {
    width: 320px;
    height: 48px;
    margin-left: 16px;
    display: flex;
    align-items: center;
    justify-content: space-between;
    padding: 0 9px 0 12px;
    background-color: #f3f4f6;
    border-radius: 10px;
    font-size: 17px;
}

.edit-circle {
    width: 32px;
    height: 32px;
    display: flex;
    align-items: center;
    justify-content: center;
    border-radius: 50%;
    background: linear-gradient(90deg, #ec0a8c, #ff6a68);
}

.skills-ai {
    height: 82px;
    display: flex;
    align-items: center;
    padding-left: 24px;
    border-top: 5px solid #f3f4f6;
    border-bottom: 5px solid #f3f4f6;
}

.ai-btn {
    width: 177px;
    height: 40px;
    display: flex;
    align-items: center;
    gap: 12px;
    padding: 0 0 2px 12px;
    border: none;
    border-radius: 8px;
    background-color: #8327d8;
    color: #e6c8f8;
    font-family: Inter, sans-serif;
    font-size: 12.500px;
    font-weight: 700;
    letter-spacing: 0.12px;
}

.skill-row {
    display: flex;
    align-items: center;
    padding: 17px 37px 0 30px;
}

.skill-eye {
    margin-top: 2px;
}

.drag-dots {
    width: 12px;
    display: grid;
    grid-template-columns: 4px 4px;
    gap: 4px;
    margin-right: 22px;
}

.drag-dots span {
    width: 4px;
    height: 4px;
    border-radius: 50%;
    background-color: #6b7280;
}

.skill-text {
    flex: 1;
}

.skill-name {
    font-size: 15px;
    font-weight: 700;
    line-height: 20px;
    color: #0b1a5c;
}

.skill-sub {
    display: flex;
    align-items: center;
    height: 18px;
    margin-top: 2px;
    padding-left: 6px;
    font-family: "Liberation Sans", Arial, sans-serif;
    font-size: 12.800px;
    color: #55595f;
}

.skill-bar {
    width: 1px;
    height: 10px;
    margin-right: 6px;
    background-color: #b0b3b8;
}

.skill-bar + span + .skill-bar {
    margin-left: 6px;
}

/* Resume paper */
.paper {
    width: 572px;
    height: 600px;
    flex: none;
    padding: 38px 55px 0;
    background-color: #fff;
    font-family: "Liberation Serif", serif;
    font-size: 9.500px;
    line-height: 13px;
    letter-spacing: 0.21px;
    color: #222;
    overflow: hidden;
}

.cv-head {
    display: flex;
    align-items: baseline;
    gap: 12px;
    height: 30px;
    line-height: 30px;
}

.cv-name {
    font-size: 24px;
    font-weight: 700;
    letter-spacing: -0.3px;
    word-spacing: 2px;
    color: #000;
}

.cv-role {
    font-size: 16px;
    font-style: italic;
    letter-spacing: 0.2px;
    color: #111;
}

.cv-contacts {
    margin-top: 6px;
    display: grid;
    grid-template-columns: 241px 1fr;
    grid-auto-rows: 20.500px;
}

.cv-contact {
    display: flex;
    align-items: center;
    gap: 6px;
}

.cv-contact svg {
    fill: #000;
}

.cv-tight {
    letter-spacing: 0.03px;
}

.cv-num {
    letter-spacing: 0.6px;
}

.cv-link {
    letter-spacing: 0.3px;
}

.cv-title {
    margin: 13px 0 7px;
    padding-bottom: 1px;
    border-bottom: 1px solid #000;
    font-size: 10.500px;
    line-height: 14px;
    font-weight: 700;
    letter-spacing: 0.45px;
    color: #111;
}

.cv-title-first {
    margin: 14px 0 6px;
}

.cv-title-exp {
    margin-top: 15px;
    padding-bottom: 0;
}

.cv-title-skills {
    padding-bottom: 2px;
    margin-bottom: 6px;
}

.cv-text {
    margin: 0;
}

.cv-entry {
    display: flex;
}

.cv-when {
    width: 106px;
    flex: none;
}

.cv-what strong {
    color: #000;
}

.cv-what em {
    color: #111;
}

.cv-indent {
    padding-left: 3px;
}

.cv-skill-name {
    font-weight: 700;
    color: #000;
}

.cv-list {
    margin-top: 6px;
}
```
